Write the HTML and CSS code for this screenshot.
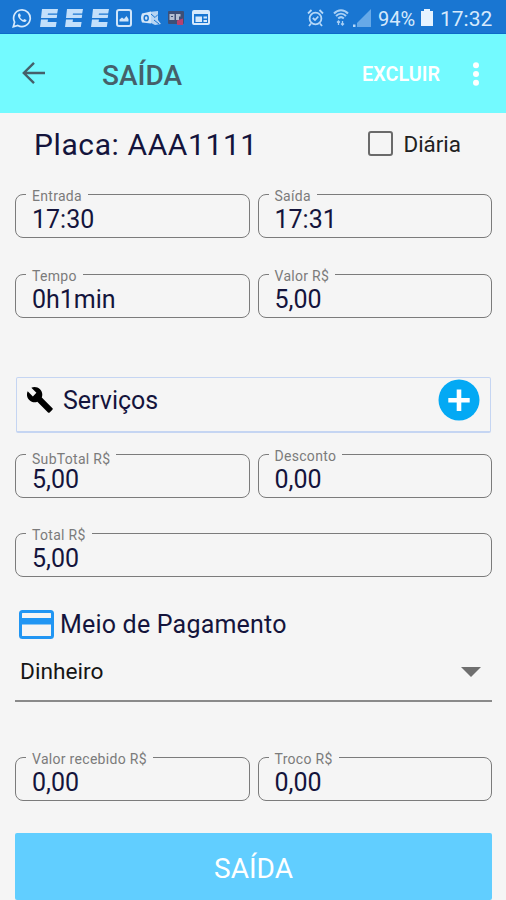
FILE: index.html
```html
<!DOCTYPE html>
<html lang="pt-BR">
  <head>
    <meta charset="UTF-8" />
    <meta name="viewport" content="width=device-width, initial-scale=1.0" />
    <title>Saída</title>
    <link rel="stylesheet" href="styles.css">
  </head>
  <body>
    <div class="status-bar">
      <div class="notifications">
        <svg width="20" height="20" viewBox="0 0 20 20" fill="none" stroke="#d5e9fc" stroke-width="1.7">
          <path d="M1.3 18.7l1.3-4.6A8.3 8.3 0 1 1 5.8 17.400z" />
          <path d="M6.800 5.500c-2 1.800 0 4.800 1.800 6.400s4.200 3 5.800 1.200l.1-1-2.200-1.200-1.100 1.100c-1.400-.4-2.700-1.700-3.200-3l.9-1.100-.9-2.300z" fill="#d5e9fc" stroke="none" />
        </svg>
        <svg width="18" height="18" viewBox="0 0 18 18" fill="#c3e0fb">
          <path d="M2 0h16l-.8 4.500H8l-.3 1.300h9.500l-.5 3.200H1zM1 10.500h7l-.4 2.500h9l-.8 5H0z" />
        </svg>
        <svg width="18" height="18" viewBox="0 0 18 18" fill="#c3e0fb">
          <path d="M2 0h16l-.8 4.500H8l-.3 1.300h9.500l-.5 3.200H1zM1 10.500h7l-.4 2.500h9l-.8 5H0z" />
        </svg>
        <svg width="18" height="18" viewBox="0 0 18 18" fill="#c3e0fb">
          <path d="M2 0h16l-.8 4.500H8l-.3 1.300h9.500l-.5 3.200H1zM1 10.500h7l-.4 2.500h9l-.8 5H0z" />
        </svg>
        <svg width="16" height="18" viewBox="0 0 16 18" fill="none" stroke="#cfe5fa" stroke-width="2">
          <rect x="1" y="1" width="14" height="16" rx="2" />
          <path d="M3.500 12.500v-2l2.500-2 2 1.500 2.500-3 2 3v2.500z" fill="#cfe5fa" stroke="none" />
        </svg>
        <svg width="20" height="16" viewBox="0 0 20 16">
          <path d="M8 2l9-1v9l3 4-6 1-4-2z" fill="#b7d5f3" />
          <path d="M10 4l4 3.500 3-3M13 10l5 4" fill="none" stroke="#1976d2" stroke-width="1" />
          <path d="M1 3.500l9-2v12L1 12.500Q-1 8 1 3.500z" fill="#d3e6f8" />
          <ellipse cx="5.200" cy="8" rx="2" ry="2.600" fill="none" stroke="#1976d2" stroke-width="1.500" />
        </svg>
        <svg width="16" height="14" viewBox="0 0 16 14">
          <rect width="16" height="13" rx="1" fill="#3d4f77" />
          <path d="M1.500 3h5v6h-5zM8 3h4.500v2.500H11V9H8z" fill="#b4bfd2" />
          <path d="M3 5h2v1H3z" fill="#3d4f77" />
          <path d="M9 9.500l6-2V14H9z" fill="#b54372" />
        </svg>
        <svg width="18" height="15" viewBox="0 0 18 15">
          <rect x="1" y="1" width="16" height="13" rx="1" fill="none" stroke="#d5e9fc" stroke-width="2" />
          <path d="M1 1h16v3H1zM3.500 6.500H10v5.500H3.500zM11.500 6.500h3.500v2h-3.500zM11.500 10h3.500v2h-3.500z" fill="#d5e9fc" />
        </svg>
      </div>
      <div class="system">
        <svg width="17" height="18" viewBox="0 0 17 18" fill="none" stroke="#b5d8f8" stroke-width="1.800">
          <circle cx="8.500" cy="9.500" r="5.900" />
          <path d="M1 4.500L4.500 1M16 4.500L12.500 1M4 14.500L2 17M13 14.500l2 2.500M5.800 9l2.200 2 3.300-3.500" />
        </svg>
        <svg width="16" height="18" viewBox="0 0 16 18" fill="none" stroke="#a9d0f5" stroke-width="2">
          <path d="M1 4.500C5 .2 11 .2 15 4.500M3 7c3-3 7-3 10 0M5.200 9.500c1.700-1.600 4-1.600 5.600 0" />
          <path d="M5.500 12v4M4 13.500L5.500 12 7 13.500M9.500 12v4M8 14.500L9.500 16l1.500-1.500" stroke-width="1.300" />
        </svg>
        <svg class="signal" width="18" height="18" viewBox="0 0 18 18">
          <path d="M18 0v18H4V14z" fill="#66a9e8" />
          <rect x="0" y="15.500" width="2.500" height="2.500" fill="#b5d8f8" />
        </svg>
        <span class="percent">94%</span>
        <svg class="battery" width="12" height="17" viewBox="0 0 12 17" fill="#e6f3ff">
          <path d="M3 0h6v2h3v15H0V2h3z" />
        </svg>
        <span class="clock">17:32</span>
      </div>
    </div>

    <div class="toolbar">
      <svg class="back" width="24" height="22" viewBox="0 0 24 22" fill="none" stroke="#45606a" stroke-width="2.400">
        <path d="M12 .9L1.800 11 12 21.100M1.800 11H23" />
      </svg>
      <h1>SAÍDA</h1>
      <span class="delete">EXCLUIR</span>
      <svg width="8" height="24" viewBox="0 0 8 24" fill="#fff">
        <circle cx="4" cy="3.200" r="3" />
        <circle cx="4" cy="12" r="3" />
        <circle cx="4" cy="20.800" r="3" />
      </svg>
    </div>

    <div class="content">
      <div class="plate-row">
        <span class="plate">Placa: AAA1111</span>
        <label class="daily"><span class="checkbox"></span>Diária</label>
      </div>

      <div class="row">
        <fieldset class="field"><legend>Entrada</legend><div class="value">17:30</div></fieldset>
        <fieldset class="field"><legend>Saída</legend><div class="value">17:31</div></fieldset>
      </div>

      <div class="row time-row">
        <fieldset class="field"><legend>Tempo</legend><div class="value">0h1min</div></fieldset>
        <fieldset class="field"><legend>Valor R$</legend><div class="value">5,00</div></fieldset>
      </div>

      <div class="services">
        <svg width="27" height="27" viewBox="1 1 23 23">
          <path d="M22.700 19l-9.100-9.100c.9-2.300.4-5-1.500-6.900-2-2-5-2.400-7.400-1.300L9 6 6 9 1.600 4.700C.4 7.100.9 10.100 2.900 12.100c1.900 1.900 4.600 2.400 6.900 1.500l9.100 9.100c.4.4 1 .4 1.400 0l2.300-2.300c.5-.4.5-1.100.1-1.400z" />
        </svg>
        <span class="services-title">Serviços</span>
        <svg class="add" width="42" height="42" viewBox="0 0 42 42">
          <circle cx="21" cy="21" r="20.500" fill="#03a9f4" />
          <path d="M21 10.500v21.500M10.300 21.200h21.400" stroke="#fff" stroke-width="4.600" />
        </svg>
      </div>

      <div class="row subtotal-row">
        <fieldset class="field subtotal"><legend>SubTotal R$</legend><div class="value">5,00</div></fieldset>
        <fieldset class="field"><legend>Desconto</legend><div class="value">0,00</div></fieldset>
      </div>

      <div class="row total-row">
        <fieldset class="field"><legend>Total R$</legend><div class="value">5,00</div></fieldset>
      </div>

      <div class="payment-title">
        <svg width="35" height="29" viewBox="0 0 35 29">
          <rect x="1.500" y="1.500" width="32" height="26" rx="2" fill="none" stroke="#2196f3" stroke-width="3" />
          <path d="M2 8h31v6.500H2z" fill="#2196f3" />
        </svg>
        <span>Meio de Pagamento</span>
      </div>

      <div class="select">
        <span>Dinheiro</span>
        <svg width="20" height="10" viewBox="0 0 20 10" fill="#6f6f6f">
          <path d="M0 0h20L10 10z" />
        </svg>
      </div>

      <div class="row received-row">
        <fieldset class="field"><legend>Valor recebido R$</legend><div class="value">0,00</div></fieldset>
        <fieldset class="field"><legend>Troco R$</legend><div class="value">0,00</div></fieldset>
      </div>

      <button class="submit">SAÍDA</button>
    </div>
  </body>
</html>
```
FILE: styles.css
```css
* {
  box-sizing: border-box;
}

body {
  margin: 0;
  width: 506px;
  height: 900px;
  overflow: hidden;
  background-color: #f5f5f5;
  font-family: Roboto, "Liberation Sans", sans-serif;
  color: #14143c;
}

svg {
  display: block;
  flex-shrink: 0;
}

.status-bar {
  display: flex;
  justify-content: space-between;
  align-items: center;
  height: 34px;
  padding: 2px 13px 0 12px;
  background-color: #1976d2;
  border-bottom: 1px solid #0c6bc8;
}

.notifications {
  display: flex;
  align-items: center;
  gap: 7.5px;
}

.notifications svg:nth-child(5) {
  margin-right: 1px;
}

.system {
  display: flex;
  align-items: center;
  color: #d5e9fc;
}

.system svg {
  margin-right: 9px;
}

.system .signal {
  margin-left: -5px;
  margin-right: 7px;
}

.percent {
  width: 43px;
  padding-top: 2px;
  font-size: 20px;
}

.system .battery {
  margin-right: 7px;
}

.clock {
  width: 53px;
  padding-top: 2px;
  font-size: 21px;
}

.toolbar {
  display: flex;
  align-items: center;
  height: 79px;
  padding: 0 26px 0 22px;
  background-color: #73faff;
}

.back {
  margin-top: -2px;
}

.toolbar h1 {
  flex: 1;
  margin: 3px 0 0 56px;
  font-size: 28px;
  font-weight: 500;
  color: #45606a;
}

.delete {
  margin: 2px 32px 0 0;
  font-size: 19.800px;
  font-weight: 600;
  color: #fff;
}

.content {
  padding: 0 14px 0 15px;
}

.plate-row {
  display: flex;
  justify-content: space-between;
  align-items: center;
  height: 62px;
  padding: 0 31px 0 19px;
}

.plate {
  font-size: 30px;
  letter-spacing: 0.6px;
}

.daily {
  display: flex;
  align-items: center;
  gap: 10px;
  font-size: 22.400px;
  color: #212121;
}

.checkbox {
  width: 25px;
  height: 25px;
  margin-top: -2px;
  border: 2px solid #6a6a6a;
  border-radius: 3px;
}

.row {
  display: flex;
  gap: 8px;
  margin-top: 11px;
}

.field {
  flex: 1;
  min-width: 0;
  height: 52px;
  margin: 0;
  padding: 0 0 0 10px;
  border: 1px solid #7b7b7b;
  border-radius: 8px;
}

.field legend {
  height: 16px;
  padding: 0 6px;
  font-size: 14px;
  line-height: 20px;
  letter-spacing: 0.3px;
  color: #7b7b7b;
}

.value {
  padding-left: 6px;
  margin-top: 1px;
  font-size: 25px;
  line-height: 34px;
}

.time-row {
  margin-top: 28px;
}

.services {
  display: flex;
  align-items: flex-start;
  height: 56px;
  margin: 59px 1px 0;
  padding: 2px 10px 0 10px;
  border: 1px solid #c5d5f2;
  border-bottom-width: 2px;
  border-radius: 2px;
}

.services > svg:first-child {
  margin-top: 7px;
}

.services .add {
  margin-top: -1px;
}

.services-title {
  flex: 1;
  margin-left: 9px;
  font-size: 25px;
  line-height: 42px;
}

.subtotal-row {
  margin-top: 13px;
}

/* this label hangs a little lower than the others */
.subtotal legend {
  line-height: 27px;
}

.total-row {
  margin-top: 27px;
}

.payment-title {
  display: flex;
  align-items: center;
  height: 34px;
  margin-top: 30px;
  padding-left: 4px;
  gap: 6px;
  font-size: 25px;
  letter-spacing: 0.2px;
}

.select {
  display: flex;
  align-items: center;
  justify-content: space-between;
  height: 61px;
  padding: 2px 11px 0 5px;
  border-bottom: 2px solid #8a8a8a;
  font-size: 22.700px;
  color: #151515;
}

.received-row {
  margin-top: 47px;
}

.submit {
  display: block;
  width: 100%;
  height: 67px;
  margin-top: 32px;
  padding: 3px 0 0;
  border: none;
  border-radius: 2px;
  background-color: #61ceff;
  color: #fff;
  font-family: inherit;
  font-size: 28px;
}
```
